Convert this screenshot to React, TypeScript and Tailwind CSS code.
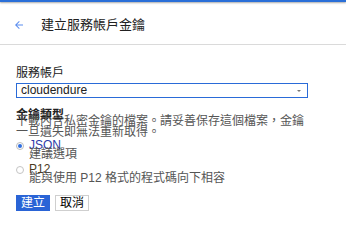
export default function App() {
  const font = { fontFamily: '"Liberation Sans", Arial, "Noto Sans CJK TC", sans-serif' };
  return (
    <div className="w-[346px] h-[241px] bg-white overflow-hidden" style={font}>
      <div className="h-[2px] bg-[#2a6fd8] shadow-[0_1px_2px_rgba(0,0,0,0.35)]" />
      <header className="h-[43px] pt-[3px] flex items-center border-b border-[#dadada]">
        <svg className="ml-[13px] w-[12px] h-[12px]" viewBox="0 0 24 24" fill="#5b8def">
          <path d="M20 11H7.83l5.59-5.59L12 4l-8 8 8 8 1.41-1.41L7.83 13H20v-2z" />
        </svg>
        <h1 className="ml-[16px] text-[13px] text-[#212121]">建立服務帳戶金鑰</h1>
      </header>

      <main className="pl-4 w-[308px]">
        <div className="mt-[21px] text-[12px] leading-[14px] text-[#212121]">服務帳戶</div>
        <div className="mt-[3px] h-[15px] border border-[#2a6bd8] flex items-center justify-between pl-[4px] pr-[6px]">
          <span className="text-[12px] leading-[13px] text-[#212121]">cloudendure</span>
          <span className="w-0 h-0 border-l-[2px] border-r-[2px] border-t-[2px] border-l-transparent border-r-transparent border-t-[#777]" />
        </div>

        <div className="mt-[11px] h-[7px] text-[12px] leading-[12px] font-bold text-[#212121]">金鑰類型</div>
        <p className="text-[12px] leading-[11px] text-[#555]">
          下載內含私密金鑰的檔案。請妥善保存這個檔案，金鑰一旦遺失即無法重新取得。
        </p>

        <div className="flex items-start">
          <span className="mt-[4px] w-[8px] h-[8px] rounded-full border border-[#bcbcbc] flex items-center justify-center">
            <span className="w-[4px] h-[4px] rounded-full bg-[#2f6ee0]" />
          </span>
          <div className="ml-[5px]">
            <div className="h-[11px] pt-[1px] text-[12px] leading-[12px] text-[#2b3aa8]">JSON</div>
            <div className="text-[12px] leading-[11px] text-[#555]">建議選項</div>
          </div>
        </div>

        <div className="mt-[2px] flex items-start">
          <span className="mt-[4px] w-[8px] h-[8px] rounded-full border border-[#c4c4c4]" />
          <div className="ml-[5px]">
            <div className="h-[11px] pt-[1px] text-[12px] leading-[12px] text-[#4a3a20]">P12</div>
            <div className="text-[12px] leading-[11px] text-[#555]">能與使用 P12 格式的程式碼向下相容</div>
          </div>
        </div>

        <div className="mt-[11px] flex gap-[5px]">
          <button className="w-[34px] h-[16px] bg-[#2a64d6] text-white text-[12px] leading-[14px] border border-[#2a64d6]">建立</button>
          <button className="w-[34px] h-[16px] bg-white text-black text-[12px] leading-[14px] border border-[#cfcfcf]">取消</button>
        </div>
      </main>
    </div>
  );
}
